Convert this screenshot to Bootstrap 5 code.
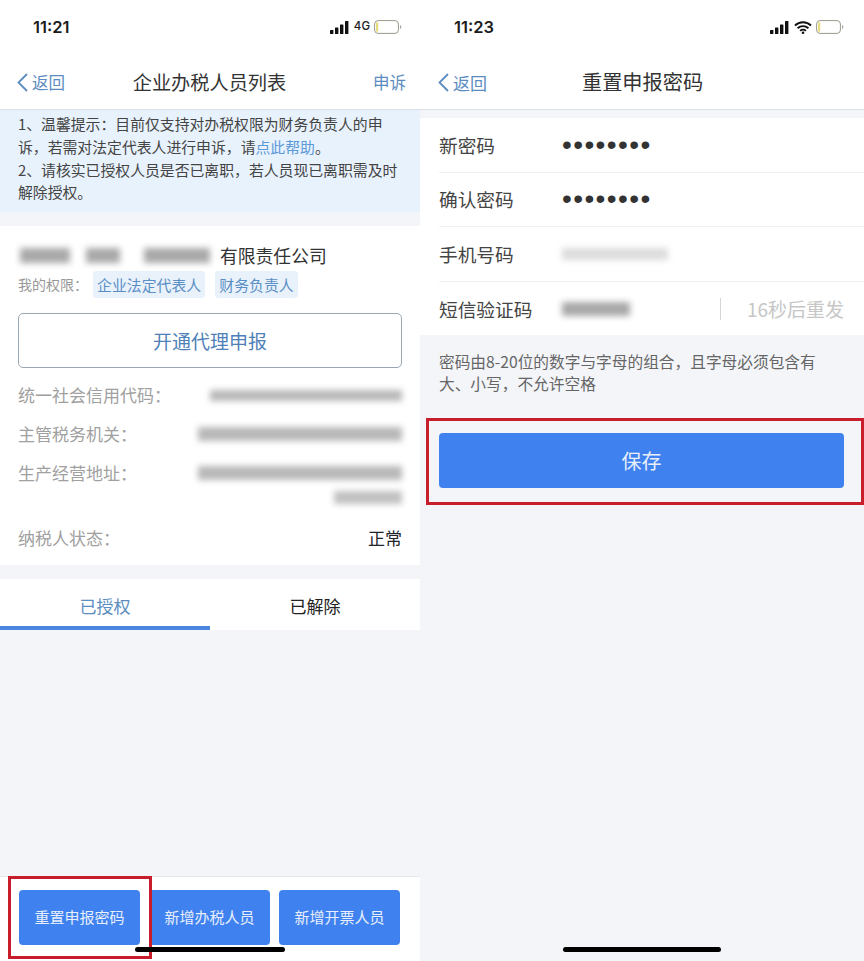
<!DOCTYPE html>
<html lang="zh-CN">

<head>
    <meta charset="UTF-8" />
    <meta name="viewport" content="width=device-width, initial-scale=1" />
    <title>重置申报密码</title>
    <link href="https://cdn.jsdelivr.net/npm/bootstrap@5.3.3/dist/css/bootstrap.min.css" rel="stylesheet" />
    <style>
        html, body { height: 961px; overflow: hidden; }
        body { font-family: "Noto Sans CJK SC", "Liberation Sans", sans-serif; background: #f3f5f9; color: #333; }
        .shots { width: 864px; height: 961px; }
        .phone { height: 961px; background: #f3f5f9; position: relative; overflow: hidden; }
        .phone-left { width: 420px; }
        .phone-right { width: 444px; }

        .status-line { height: 54px; background: #fff; padding: 0 18px 0 33px; }
        .phone-right .status-line { padding: 0 20px 0 34px; }
        .clock { font: 600 16.5px/1 Inter, "Liberation Sans", sans-serif; color: #1c1c1c; }
        .net-label { font: 500 11.5px/1 Inter, "Liberation Sans", sans-serif; color: #222; }

        .top-nav { height: 56px; background: #fff; border-bottom: 1px solid #dcdfe4; padding: 2px 14px 0 17px; }
        .phone-right .top-nav { padding-left: 18px; }
        .nav-side { flex: 1 1 0; font-size: 16.5px; color: #5b8cc0; }
        .phone-right .nav-side { font-size: 17px; }
        .nav-title { font-size: 19.2px; color: #333; margin-left: -4px; }
        .phone-right .nav-title { font-size: 20.2px; margin-left: -3px; }

        .notice { background: #e8f2fc; height: 102px; padding: 3px 0 0 18px; font-size: 14.85px; line-height: 22.8px; color: #444; white-space: nowrap; }
        .notice-link { color: #5b98d8; }

        .firm-card { margin-top: 14px; background: #fff; height: 339px; padding: 16px 18px 0; }
        .firm-name { height: 26px; font-size: 17.8px; line-height: 26px; color: #333; }
        .smear { background: #a9a9a9; filter: blur(3px); }
        .smear-a { width: 50px; height: 15px; margin: 0 16px 0 2px; }
        .smear-b { width: 34px; height: 15px; margin-right: 24px; }
        .smear-c { width: 66px; height: 15px; margin-right: 10px; }
        .perm-line { margin-top: 3px; font-size: 14px; color: #999; }
        .perm-label { margin-right: 5px; }
        .perm-tag { background: #e9f2fb; color: #5a8fc6; font-size: 14.9px; line-height: 27px; padding: 0 4px; border-radius: 3px; margin-right: 10px; }
        .agent-btn { display: block; width: 384px; height: 55px; margin-top: 15px; font-size: 19px; line-height: 53px; padding: 0; color: #4f80b8; background: #fff; border: 1px solid #9aa8b6; border-radius: 5px; }
        .info-line { margin-top: 15px; font-size: 17px; line-height: 24px; color: #a0a0a0; }
        .info-status { margin-top: 22px; }
        .smear-code { width: 192px; height: 11px; background: #b8b8b8; }
        .smear-wide { width: 204px; height: 14px; background: #b8b8b8; }
        .smear-short { width: 68px; height: 13px; background: #c0c0c0; margin: 6px 0 0 auto; }

        .tab-strip { margin-top: 14px; height: 51px; background: #fff; }
        .tab-item { width: 210px; height: 51px; font-size: 17px; line-height: 53px; text-align: center; color: #222; }
        .tab-on { color: #5c8dc0; border-bottom: 4px solid #4a86e0; }

        .foot-bar { margin-top: auto; height: 85px; background: #fff; border-top: 1px solid #e6e8ec; padding: 13px 20px 0 19px; }
        .foot-btn { width: 121px; height: 55px; padding: 0; font-size: 15px; color: #e8effb; background: #3f82ef; border: 0; border-radius: 4px; }

        .red-frame { position: absolute; border: 3px solid #c81e2b; }
        .red-left { left: 8px; top: 876px; width: 144px; height: 83px; }
        .red-right { left: 6px; top: 418px; width: 438px; height: 87px; }
        .home-bar { position: absolute; height: 5px; border-radius: 3px; background: #000; }
        .home-left { left: 135px; top: 947px; width: 150px; }
        .home-right { left: 143px; top: 947px; width: 158px; }

        .pwd-form { margin-top: 8px; background: #fff; padding-left: 19px; height: 217px; }
        .pwd-row { height: 54.5px; border-bottom: 1px solid #f0f1f3; padding-right: 20px; }
        .pwd-row:last-child { border-bottom: 0; }
        .pwd-label { width: 123px; font-size: 18.7px; color: #444; }
        .pwd-dots { font: 28px/1 "Liberation Sans", sans-serif; letter-spacing: 1.4px; color: #333; }
        .smear-phone { width: 106px; height: 12px; background: #dcdcdc; }
        .smear-sms { width: 68px; height: 14px; background: #a8a8a8; }
        .resend { font-size: 19px; color: #c6c6c6; border-left: 1px solid #d6d6d6; padding-left: 26px; line-height: 22px; }
        .pwd-tip { padding: 16px 0 0 19px; font-size: 15.7px; line-height: 22px; color: #666; white-space: nowrap; }
        .save-btn { display: block; width: 405px; height: 55px; margin: 38px 0 0 19px; padding: 0; font-size: 20px; color: #e8effb; background: #3f82ef; border: 0; border-radius: 4px; }
    </style>
</head>

<body>
    <div class="shots d-flex">
        <!-- 左边:办税人员列表 -->
        <div class="phone phone-left d-flex flex-column">
            <div class="status-line d-flex align-items-center justify-content-between">
                <span class="clock">11:21</span>
                <span class="d-flex align-items-center gap-1">
                    <svg width="20" height="13" viewBox="0 0 20 13"><rect x="0" y="9" width="3.4" height="4" rx=".6" fill="#111"/><rect x="5" y="6.5" width="3.4" height="6.5" rx=".6" fill="#111"/><rect x="10" y="3.5" width="3.4" height="9.5" rx=".6" fill="#111"/><rect x="15" y="0" width="3.4" height="13" rx=".6" fill="#111"/></svg>
                    <span class="net-label">4G</span>
                    <svg width="28" height="14" viewBox="0 0 28 14"><rect x=".6" y=".6" width="23.8" height="12.8" rx="3.4" fill="#fff" stroke="#9a9a8a" stroke-width="1"/><rect x="2" y="2.2" width="2.2" height="9.6" rx="1" fill="#e6dc7a"/><path d="M26 5v4c.9-.3 1.3-1 1.3-2s-.4-1.7-1.3-2z" fill="#aaa"/></svg>
                </span>
            </div>
            <div class="top-nav d-flex align-items-center">
                <div class="nav-side d-flex align-items-center gap-1">
                    <svg width="11" height="19" viewBox="0 0 11 19"><path d="M10 1 1.5 9.5 10 18" fill="none" stroke="#5b8cc0" stroke-width="1.8"/></svg>
                    <span>返回</span>
                </div>
                <div class="nav-title">企业办税人员列表</div>
                <div class="nav-side text-end">申诉</div>
            </div>
            <div class="notice">
                1、温馨提示&#65306;目前仅支持对办税权限为财务负责人的申<br />
                诉&#65292;若需对法定代表人进行申诉&#65292;请<span class="notice-link">点此帮助</span>。<br />
                2、请核实已授权人员是否已离职&#65292;若人员现已离职需及时<br />
                解除授权。
            </div>
            <div class="firm-card">
                <div class="firm-name d-flex align-items-center">
                    <span class="smear smear-a"></span><span class="smear smear-b"></span><span class="smear smear-c"></span><span>有限责任公司</span>
                </div>
                <div class="perm-line d-flex align-items-center">
                    <span class="perm-label">我的权限&#65306;</span>
                    <span class="perm-tag">企业法定代表人</span>
                    <span class="perm-tag">财务负责人</span>
                </div>
                <button type="button" class="btn agent-btn">开通代理申报</button>
                <div class="info-line d-flex align-items-center justify-content-between">
                    <span>统一社会信用代码&#65306;</span><span class="smear smear-code"></span>
                </div>
                <div class="info-line d-flex align-items-center justify-content-between">
                    <span>主管税务机关&#65306;</span><span class="smear smear-wide"></span>
                </div>
                <div class="info-line d-flex align-items-center justify-content-between">
                    <span>生产经营地址&#65306;</span><span class="smear smear-wide"></span>
                </div>
                <div class="smear smear-short"></div>
                <div class="info-line info-status d-flex align-items-center justify-content-between">
                    <span>纳税人状态&#65306;</span><span class="text-dark">正常</span>
                </div>
            </div>
            <div class="tab-strip d-flex">
                <div class="tab-item tab-on">已授权</div>
                <div class="tab-item">已解除</div>
            </div>
            <div class="foot-bar d-flex justify-content-between">
                <button type="button" class="btn foot-btn">重置申报密码</button>
                <button type="button" class="btn foot-btn">新增办税人员</button>
                <button type="button" class="btn foot-btn">新增开票人员</button>
            </div>
            <div class="red-frame red-left"></div>
            <div class="home-bar home-left"></div>
        </div>

        <!-- 右边:重置申报密码 -->
        <div class="phone phone-right d-flex flex-column">
            <div class="status-line d-flex align-items-center justify-content-between">
                <span class="clock">11:23</span>
                <span class="d-flex align-items-center gap-1">
                    <svg width="20" height="13" viewBox="0 0 20 13"><rect x="0" y="9" width="3.4" height="4" rx=".6" fill="#111"/><rect x="5" y="6.5" width="3.4" height="6.5" rx=".6" fill="#111"/><rect x="10" y="3.5" width="3.4" height="9.5" rx=".6" fill="#111"/><rect x="15" y="0" width="3.4" height="13" rx=".6" fill="#111"/></svg>
                    <svg width="18" height="13" viewBox="0 0 18 13"><path d="M1 4.5a11.5 11.5 0 0 1 16 0M3.6 7.3a7.7 7.7 0 0 1 10.8 0M6.2 9.9a4 4 0 0 1 5.6 0" fill="none" stroke="#111" stroke-width="1.9"/><circle cx="9" cy="11.7" r="1.3" fill="#111"/></svg>
                    <svg width="28" height="14" viewBox="0 0 28 14"><rect x=".6" y=".6" width="23.8" height="12.8" rx="3.4" fill="#fff" stroke="#9a9a8a" stroke-width="1"/><rect x="2" y="2.2" width="2.2" height="9.6" rx="1" fill="#e6dc7a"/><path d="M26 5v4c.9-.3 1.3-1 1.3-2s-.4-1.7-1.3-2z" fill="#aaa"/></svg>
                </span>
            </div>
            <div class="top-nav d-flex align-items-center">
                <div class="nav-side d-flex align-items-center gap-1">
                    <svg width="11" height="19" viewBox="0 0 11 19"><path d="M10 1 1.5 9.5 10 18" fill="none" stroke="#5b8cc0" stroke-width="1.8"/></svg>
                    <span>返回</span>
                </div>
                <div class="nav-title">重置申报密码</div>
                <div class="nav-side"></div>
            </div>
            <div class="pwd-form">
                <div class="pwd-row d-flex align-items-center">
                    <span class="pwd-label">新密码</span><span class="pwd-dots">••••••••</span>
                </div>
                <div class="pwd-row d-flex align-items-center">
                    <span class="pwd-label">确认密码</span><span class="pwd-dots">••••••••</span>
                </div>
                <div class="pwd-row d-flex align-items-center">
                    <span class="pwd-label">手机号码</span><span class="smear smear-phone"></span>
                </div>
                <div class="pwd-row d-flex align-items-center">
                    <span class="pwd-label">短信验证码</span><span class="smear smear-sms"></span>
                    <span class="resend ms-auto">16秒后重发</span>
                </div>
            </div>
            <div class="pwd-tip">密码由8-20位的数字与字母的组合&#65292;且字母必须包含有<br />大、小写&#65292;不允许空格</div>
            <button type="button" class="btn save-btn">保存</button>
            <div class="red-frame red-right"></div>
            <div class="home-bar home-right"></div>
        </div>
    </div>

    <script src="https://cdn.jsdelivr.net/npm/bootstrap@5.3.3/dist/js/bootstrap.bundle.min.js"></script>
</body>

</html>
